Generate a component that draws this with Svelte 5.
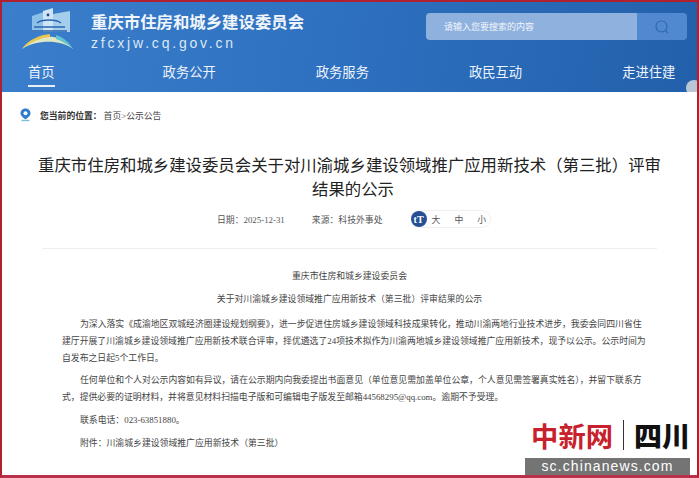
<script>
  const navItems = ['首页', '政务公开', '政务服务', '政民互动', '走进住建'];
  const paragraphs = [
    '为深入落实《成渝地区双城经济圈建设规划纲要》，进一步促进住房城乡建设领域科技成果转化，推动川渝两地行业技术进步，我委会同四川省住建厅开展了川渝城乡建设领域推广应用新技术联合评审，择优遴选了24项技术拟作为川渝两地城乡建设领域推广应用新技术，现予以公示。公示时间为自发布之日起5个工作日。',
    '任何单位和个人对公示内容如有异议，请在公示期内向我委提出书面意见（单位意见需加盖单位公章，个人意见需签署真实姓名），并留下联系方式，提供必要的证明材料，并将意见材料扫描电子版和可编辑电子版发至邮箱44568295@qq.com。逾期不予受理。',
    '联系电话：023-63851880。',
    '附件：川渝城乡建设领域推广应用新技术（第三批）'
  ];
</script>

<div class="page">
  <header class="header">
    <div class="top">
      <svg class="logo" width="58" height="44" viewBox="0 0 58 44">
        <path d="M12 8 L24 4 V24 H12 Z" fill="#8cc0e8" />
        <path d="M23 3 L33 0 V24 H23 Z" fill="#cfe4f5" />
        <path d="M33 6 L50 3 V24 H33 Z" fill="#a5cdec" />
        <circle cx="28" cy="7" r="1.4" fill="#23487f" />
        <path d="M17 15 C22 11 36 11 41 15 M14 19 H45 M12 23 H47" stroke="#2b66ad" stroke-width="1.3" fill="none" />
        <path d="M2 41 C12 27 38 22 53 41 C40 31 16 32 2 41 Z" fill="#dfe8c4" />
        <path d="M2 41 C9 31 20 27 30 26 L30 29 C20 30 11 34 2 41 Z" fill="#e9c552" />
        <path d="M36 27 C43 29 49 34 53 41 C47 36 42 33 36 31 Z" fill="#62c4d0" />
      </svg>
      <div class="brand">
        <div class="site-name">重庆市住房和城乡建设委员会</div>
        <div class="domain">zfcxjw.cq.gov.cn</div>
      </div>
      <div class="search">
        <div class="search-input">请输入您要搜索的内容</div>
        <div class="search-btn">
          <svg width="16" height="16" viewBox="0 0 16 16" fill="none" stroke="#2f68ae" stroke-width="1.2">
            <circle cx="7.5" cy="7.5" r="5.5" />
            <path d="M11.5 11.5 L14 14" />
          </svg>
        </div>
      </div>
    </div>
    <nav class="nav">
      {#each navItems as item, i}
        <span class="nav-item" class:active={i === 0}>{item}</span>
      {/each}
    </nav>
    <div class="float-badge"></div>
  </header>

  <div class="crumb">
    <svg width="11" height="14" viewBox="0 0 11 14">
      <path d="M5.5 0.5 C2.5 0.5 0.5 2.7 0.5 5.3 C0.5 8 3.5 10 5.5 11.5 C7.5 10 10.5 8 10.5 5.3 C10.5 2.7 8.5 0.5 5.5 0.5 Z" fill="#2f7bd0" />
      <circle cx="5.5" cy="5.2" r="2" fill="#fff" />
      <path d="M1.5 12.5 H9.5" stroke="#7cc0dc" stroke-width="1.4" />
    </svg>
    <span class="crumb-label">您当前的位置：</span>
    <span class="crumb-path">首页&gt;公示公告</span>
  </div>

  <h1 class="title">重庆市住房和城乡建设委员会关于对川渝城乡建设领域推广应用新技术（第三批）评审<span class="title-rest">结果的公示</span></h1>

  <div class="meta">
    <span>日期：2025-12-31</span>
    <span>来源：科技外事处</span>
    <div class="size-switch">
      <span class="size-icon">tT</span>
      <span>大</span>
      <span>中</span>
      <span>小</span>
    </div>
  </div>

  <article class="article">
    <p class="center">重庆市住房和城乡建设委员会</p>
    <p class="center subtitle">关于对川渝城乡建设领域推广应用新技术（第三批）评审结果的公示</p>
    {#each paragraphs as para, i}
      <p class="para" class:lead={i === 0}>{para}</p>
    {/each}
  </article>

  <div class="watermark">
    <div class="wm-top">
      <span class="wm-cn">中新网</span>
      <span class="wm-sep"></span>
      <span class="wm-sc">四川</span>
    </div>
    <div class="wm-url">sc.chinanews.com</div>
  </div>
</div>

<style>
  :global(body) {
    margin: 0;
    background: #fff;
  }

  .page {
    position: relative;
    box-sizing: border-box;
    width: 699px;
    height: 478px;
    overflow: hidden;
    background: #fff;
    border: 2px solid #b0202e;
    border-bottom: 3px solid #b8304a;
    font-family: "Liberation Serif", "Noto Sans CJK SC", serif;
    color: #333;
  }

  .header {
    position: relative;
    height: 90px;
    overflow: hidden;
    background: linear-gradient(100deg, #3b7ecb 0%, #2d70bf 50%, #2360ab 100%);
    color: #fff;
  }

  .float-badge {
    position: absolute;
    right: -5px;
    bottom: -4px;
    width: 16px;
    height: 16px;
    border-radius: 50%;
    background: #b9c6d6;
  }

  .top {
    display: flex;
    align-items: flex-start;
    height: 60px;
    padding: 6px 10px 0 18px;
    box-sizing: border-box;
  }

  .logo {
    flex: none;
    margin-right: 13px;
  }

  .brand {
    flex: 1;
    padding-top: 3px;
  }

  .site-name {
    font-family: "Noto Sans CJK SC", sans-serif;
    font-size: 16.4px;
    line-height: 20px;
    font-weight: 700;
    color: #f0f5fb;
  }

  .domain {
    font-family: "Liberation Sans", sans-serif;
    font-size: 14px;
    line-height: 16px;
    margin-top: 4px;
    letter-spacing: 2.8px;
    color: #dbe8f6;
  }

  .search {
    display: flex;
    width: 261px;
    height: 27px;
    margin-top: 5px;
    border-radius: 4px;
    overflow: hidden;
  }

  .search-input {
    flex: 1;
    padding-left: 18px;
    background: #8fb1de;
    font-family: "Noto Sans CJK SC", sans-serif;
    font-size: 9px;
    line-height: 27px;
    color: #f2f6fb;
  }

  .search-btn {
    display: flex;
    align-items: center;
    justify-content: center;
    width: 50px;
    background: #5288cf;
  }

  .nav {
    display: flex;
    gap: 100px;
    padding-left: 26px;
  }

  .nav-item {
    height: 25px;
    box-sizing: border-box;
    font-family: "Noto Sans CJK SC", sans-serif;
    font-size: 13.3px;
    line-height: 20px;
    color: #eef4fb;
  }

  .nav-item.active {
    margin-right: 8px;
    border-bottom: 2px solid #e8eef5;
  }

  .crumb {
    display: flex;
    align-items: center;
    height: 46px;
    padding-left: 18px;
    font-size: 8.8px;
    color: #444;
  }

  .crumb-label {
    margin-left: 9px;
    font-weight: 700;
    color: #333;
  }

  .crumb-path {
    margin-left: 2px;
  }

  .title {
    margin: 14px 36px 0;
    font-family: "Noto Sans CJK SC", sans-serif;
    font-size: 16.4px;
    line-height: 24px;
    font-weight: 400;
    text-align: center;
    color: #222;
  }

  .title-rest {
    display: block;
    padding-left: 7px;
  }

  .meta {
    display: flex;
    align-items: center;
    gap: 27px;
    height: 24px;
    margin: 7px 40px 0;
    padding-left: 175px;
    font-size: 8.85px;
    color: #555;
  }

  .size-switch {
    display: flex;
    align-items: center;
    gap: 14px;
    height: 16px;
    margin-left: 1px;
    padding-right: 4px;
    border: 1px solid #f0f0f0;
    border-left: none;
    border-radius: 9px;
  }

  .size-icon {
    display: flex;
    align-items: center;
    justify-content: center;
    width: 16px;
    height: 16px;
    margin-right: -9px;
    border-radius: 50%;
    background: #274f94;
    font-family: "Liberation Serif", serif;
    font-size: 10px;
    font-weight: 700;
    color: #fff;
  }

  .article {
    margin: 17px 40px 0;
    padding-top: 19px;
    border-top: 1px solid #eee;
    font-size: 8.85px;
    line-height: 17px;
    color: #444;
  }

  .article p {
    margin: 0 0 6px;
  }

  .article .subtitle {
    margin-bottom: 8px;
  }

  .article .lead {
    margin-bottom: 5px;
  }

  .center {
    text-align: center;
  }

  .para {
    padding: 0 8px 0 20px;
    text-indent: 18px;
  }

  .watermark {
    position: absolute;
    right: 7px;
    bottom: 0;
    width: 165px;
  }

  .wm-top {
    display: flex;
    align-items: center;
    justify-content: flex-end;
    height: 30px;
  }

  .wm-cn {
    font-family: "Noto Sans CJK SC", sans-serif;
    font-size: 27.3px;
    font-weight: 700;
    line-height: 30px;
    color: #c8202c;
  }

  .wm-sep {
    width: 1px;
    height: 30px;
    margin: 0 10px;
    background: #333;
  }

  .wm-sc {
    font-family: "Noto Sans CJK SC", sans-serif;
    font-size: 28px;
    font-weight: 900;
    line-height: 30px;
    color: #111;
  }

  .wm-url {
    margin-top: 8px;
    height: 17px;
    background: rgba(70, 70, 70, 0.75);
    font-family: "Liberation Sans", sans-serif;
    font-size: 14px;
    line-height: 17px;
    letter-spacing: 1.1px;
    text-align: center;
    color: #fff;
  }
</style>
